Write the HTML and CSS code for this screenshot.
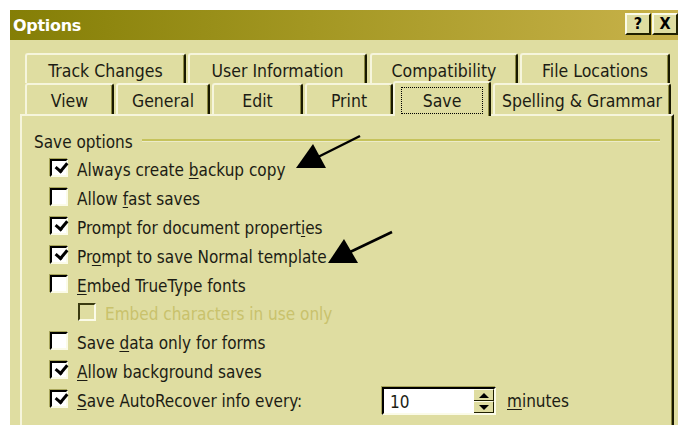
FILE: index.html
```html
<!DOCTYPE html>
<html>
<head>
<meta charset="utf-8">
<title>Options</title>
<link rel="stylesheet" href="styles.css">
</head>
<body>
<div class="window">
  <div class="titlebar">
    <span class="title">Options</span>
    <div class="caption-buttons">
      <span class="cap-btn">?</span>
      <span class="cap-btn cap-close">X</span>
    </div>
  </div>
  <div class="client">
    <div class="tabstrip">
      <div class="tab-row">
        <span class="tab w-track">Track Changes</span>
        <span class="tab w-user">User Information</span>
        <span class="tab w-compat">Compatibility</span>
        <span class="tab w-files">File Locations</span>
      </div>
      <div class="tab-row">
        <span class="tab w-view">View</span>
        <span class="tab w-general">General</span>
        <span class="tab w-edit">Edit</span>
        <span class="tab w-print">Print</span>
        <span class="tab w-save selected"><span class="focus">Save</span></span>
        <span class="tab w-spell">Spelling &amp; Grammar</span>
      </div>
    </div>
    <div class="panel">
      <div class="group">
        <div class="group-head"><span>Save options</span><i class="group-line"></i></div>
        <div class="row"><span class="box checked"></span><span class="label">Always create <u>b</u>ackup copy</span></div>
        <div class="row"><span class="box"></span><span class="label">Allow <u>f</u>ast saves</span></div>
        <div class="row"><span class="box checked"></span><span class="label">Prompt for document propert<u>i</u>es</span></div>
        <div class="row"><span class="box checked"></span><span class="label">Pr<u>o</u>mpt to save Normal template</span></div>
        <div class="row"><span class="box"></span><span class="label"><u>E</u>mbed TrueType fonts</span></div>
        <div class="row indent disabled"><span class="box"></span><span class="label">Embed characters in use only</span></div>
        <div class="row"><span class="box"></span><span class="label">Save <u>d</u>ata only for forms</span></div>
        <div class="row"><span class="box checked"></span><span class="label"><u>A</u>llow background saves</span></div>
        <div class="row"><span class="box checked"></span><span class="label label-fixed"><u>S</u>ave AutoRecover info every:</span>
          <span class="spin">
            <span class="spin-field">10</span>
            <span class="spin-btns"><span class="spin-up"></span><span class="spin-down"></span></span>
          </span>
          <span class="label unit"><u>m</u>inutes</span>
        </div>
      </div>
    </div>
  </div>
</div>
<svg class="callouts" width="678" height="425" viewBox="0 0 678 425">
  <line x1="360" y1="136" x2="316" y2="158" stroke="#000" stroke-width="2.5"/>
  <polygon points="296,168 326,168 313,144" fill="#000"/>
  <line x1="392" y1="232" x2="348" y2="253" stroke="#000" stroke-width="2.5"/>
  <polygon points="328,263 358,263 344,239" fill="#000"/>
</svg>
</body>
</html>
```
FILE: styles.css
```css
html, body {
  margin: 0;
  padding: 0;
  background: #ffffff;
}
body {
  position: relative;
  width: 678px;
  height: 425px;
  overflow: hidden;
  font-family: "DejaVu Sans Condensed", "DejaVu Sans", sans-serif;
  font-stretch: condensed;
  font-size: 17px;
  color: #1c1c14;
}
.window {
  margin: 10px 0 0 10px;
  width: 668px;
  height: 415px;
  background: #dfdda1;
  display: flex;
  flex-direction: column;
}
.titlebar {
  height: 30px;
  flex: none;
  display: flex;
  align-items: center;
  justify-content: space-between;
  background: linear-gradient(to right, #847e06 0%, #a39722 45%, #c8b24a 100%);
}
.title {
  padding-left: 3px;
  font-family: "DejaVu Sans", sans-serif;
  font-stretch: normal;
  font-weight: bold;
  font-size: 16px;
  color: #fff;
  letter-spacing: -0.3px;
}
.caption-buttons {
  display: flex;
  gap: 1px;
  align-self: flex-start;
  margin-top: 3px;
}
.cap-btn {
  width: 22px;
  height: 18px;
  background: #dfdda1;
  border-top: 2px solid #fbfbe8;
  border-left: 2px solid #fbfbe8;
  border-right: 2px solid #202000;
  border-bottom: 2px solid #202000;
  display: flex;
  align-items: center;
  justify-content: center;
  font-family: "DejaVu Sans", sans-serif;
  font-weight: bold;
  font-size: 16px;
  line-height: 1;
  color: #000;
}
.client {
  flex: 1;
  padding-left: 10px;
  display: flex;
  flex-direction: column;
}
.tabstrip {
  margin-top: 13px;
  padding-left: 5px;
  position: relative;
  z-index: 1;
}
.tab-row {
  display: flex;
  height: 30px;
}
.tab-row + .tab-row {
  height: 31px;
}
.tab {
  box-sizing: border-box;
  height: 100%;
  display: flex;
  align-items: center;
  justify-content: center;
  padding-top: 3px;
  font-size: 17.5px;
  background: #dfdda1;
  border-top: 2px solid #f6f5dc;
  border-left: 2px solid #f6f5dc;
  border-right: 2px solid #181800;
  border-radius: 3px 3px 0 0;
  margin-right: 2px;
  box-shadow: inset -1px 0 0 #8c8840;
  white-space: nowrap;
}
.w-track { width: 161px; }
.w-user { width: 179px; }
.w-compat { width: 148px; margin-left: 1px; }
.w-files { width: 150px; }
.w-view { width: 89px; }
.w-general { width: 94px; }
.w-edit { width: 91px; }
.w-print { width: 88px; margin-right: 0; }
.w-save { width: 98px; }
.w-spell { width: 178px; }
.tab.selected {
  height: 35px;
  margin-top: -2px;
  position: relative;
  z-index: 2;
  align-items: flex-start;
  padding-top: 4px;
}
.focus {
  display: block;
  box-sizing: border-box;
  width: 82px;
  height: 27px;
  border: 1px dotted #000;
  text-align: center;
  line-height: 27px;
}
.panel {
  flex: 1;
  margin-right: 4px;
  border-top: 2px solid #f6f5dc;
  border-left: 2px solid #f6f5dc;
  border-right: 2px solid #181800;
  box-shadow: inset -1px 0 0 #8c8840;
  padding: 14px 12px 0 12px;
}
.group-head {
  height: 20px;
  display: flex;
  align-items: center;
  gap: 9px;
  padding-top: 2px;
}
.group-line {
  flex: 1;
  height: 2px;
  margin-top: -4px;
  background: #c6c35c;
  border-bottom: 1px solid #ecebc8;
}
.group {
  display: flex;
  flex-direction: column;
}
.row {
  height: 28.9px;
  display: flex;
  align-items: center;
  padding-left: 16px;
  gap: 9px;
  white-space: nowrap;
}
.group-head + .row {
  margin-top: 1.5px;
}
.label {
  padding-top: 4px;
}
.row.indent {
  padding-left: 44px;
}
.row u {
  text-decoration-thickness: 1px;
  text-underline-offset: 2px;
}
.box {
  box-sizing: border-box;
  width: 18px;
  height: 18px;
  flex: none;
  background: #fff;
  border-top: 2px solid #000;
  border-left: 2px solid #000;
  border-right: 2px solid #fbfbe8;
  border-bottom: 2px solid #fbfbe8;
  box-shadow: -1px -1px 0 #a8a55a;
  position: relative;
}
.box.checked::after {
  content: "";
  position: absolute;
  left: 2px;
  top: 0px;
  width: 9px;
  height: 5px;
  border-left: 3px solid #000;
  border-bottom: 3px solid #000;
  transform: rotate(-50deg) translate(0px, 2px);
}
.disabled {
  color: #c9c26c;
}
.disabled .box {
  background: transparent;
  border-top-color: #3a3a10;
  border-left-color: #3a3a10;
  box-shadow: none;
}
.label-fixed {
  width: 296px;
}
.spin {
  box-sizing: border-box;
  width: 114px;
  height: 28px;
  margin-top: 3px;
  display: flex;
  background: #fff;
  border-top: 2px solid #000;
  border-left: 2px solid #000;
  border-right: 2px solid #fbfbe8;
  border-bottom: 2px solid #fbfbe8;
  box-shadow: -1px -1px 0 #a8a55a;
}
.spin-field {
  flex: 1;
  padding-left: 6px;
  line-height: 26px;
}
.spin-btns {
  width: 20px;
  display: flex;
  flex-direction: column;
}
.spin-up, .spin-down {
  flex: 1;
  background: #dfdda1;
  border-top: 1px solid #fbfbe8;
  border-bottom: 1px solid #202000;
  border-right: 1px solid #202000;
  position: relative;
}
.spin-up::after, .spin-down::after {
  content: "";
  position: absolute;
  left: 5px;
  top: 3px;
  border-left: 5px solid transparent;
  border-right: 5px solid transparent;
}
.spin-up::after {
  border-bottom: 5px solid #000;
}
.spin-down::after {
  border-top: 5px solid #000;
}
.unit {
  margin-left: 2px;
}
.callouts {
  position: absolute;
  left: 0;
  top: 0;
  pointer-events: none;
}
```
